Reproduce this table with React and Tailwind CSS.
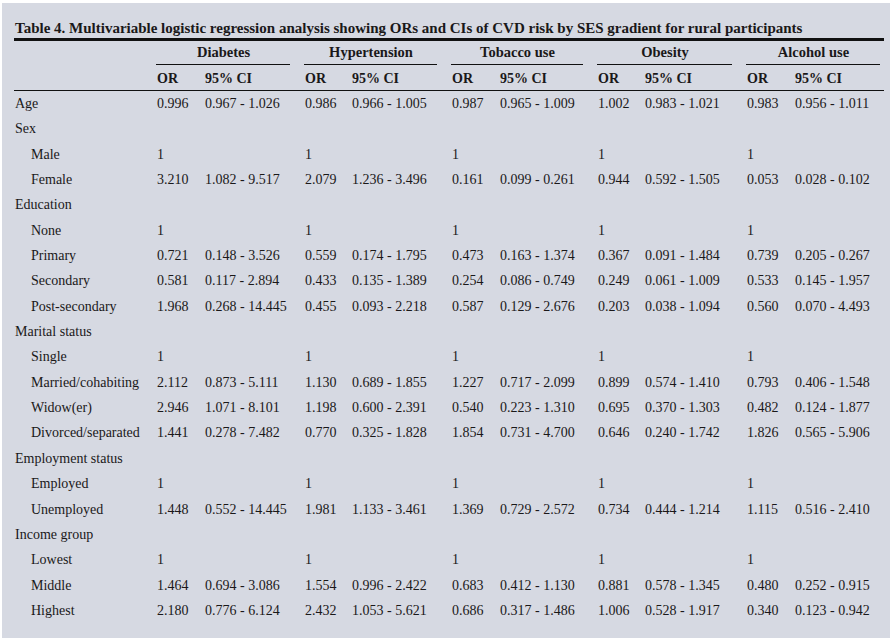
import React from "react";

const groups = ["Diabetes", "Hypertension", "Tobacco use", "Obesity", "Alcohol use"];

const ones = ["1", "", "1", "", "1", "", "1", "", "1", ""];

const rows = [
  { label: "Age", v: ["0.996", "0.967 - 1.026", "0.986", "0.966 - 1.005", "0.987", "0.965 - 1.009", "1.002", "0.983 - 1.021", "0.983", "0.956 - 1.011"] },
  { label: "Sex" },
  { label: "Male", sub: true, v: ones },
  { label: "Female", sub: true, v: ["3.210", "1.082 - 9.517", "2.079", "1.236 - 3.496", "0.161", "0.099 - 0.261", "0.944", "0.592 - 1.505", "0.053", "0.028 - 0.102"] },
  { label: "Education" },
  { label: "None", sub: true, v: ones },
  { label: "Primary", sub: true, v: ["0.721", "0.148 - 3.526", "0.559", "0.174 - 1.795", "0.473", "0.163 - 1.374", "0.367", "0.091 - 1.484", "0.739", "0.205 - 0.267"] },
  { label: "Secondary", sub: true, v: ["0.581", "0.117 - 2.894", "0.433", "0.135 - 1.389", "0.254", "0.086 - 0.749", "0.249", "0.061 - 1.009", "0.533", "0.145 - 1.957"] },
  { label: "Post-secondary", sub: true, v: ["1.968", "0.268 - 14.445", "0.455", "0.093 - 2.218", "0.587", "0.129 - 2.676", "0.203", "0.038 - 1.094", "0.560", "0.070 - 4.493"] },
  { label: "Marital status" },
  { label: "Single", sub: true, v: ones },
  { label: "Married/cohabiting", sub: true, v: ["2.112", "0.873 - 5.111", "1.130", "0.689 - 1.855", "1.227", "0.717 - 2.099", "0.899", "0.574 - 1.410", "0.793", "0.406 - 1.548"] },
  { label: "Widow(er)", sub: true, v: ["2.946", "1.071 - 8.101", "1.198", "0.600 - 2.391", "0.540", "0.223 - 1.310", "0.695", "0.370 - 1.303", "0.482", "0.124 - 1.877"] },
  { label: "Divorced/separated", sub: true, v: ["1.441", "0.278 - 7.482", "0.770", "0.325 - 1.828", "1.854", "0.731 - 4.700", "0.646", "0.240 - 1.742", "1.826", "0.565 - 5.906"] },
  { label: "Employment status" },
  { label: "Employed", sub: true, v: ones },
  { label: "Unemployed", sub: true, v: ["1.448", "0.552 - 14.445", "1.981", "1.133 - 3.461", "1.369", "0.729 - 2.572", "0.734", "0.444 - 1.214", "1.115", "0.516 - 2.410"] },
  { label: "Income group" },
  { label: "Lowest", sub: true, v: ones },
  { label: "Middle", sub: true, v: ["1.464", "0.694 - 3.086", "1.554", "0.996 - 2.422", "0.683", "0.412 - 1.130", "0.881", "0.578 - 1.345", "0.480", "0.252 - 0.915"] },
  { label: "Highest", sub: true, v: ["2.180", "0.776 - 6.124", "2.432", "1.053 - 5.621", "0.686", "0.317 - 1.486", "1.006", "0.528 - 1.917", "0.340", "0.123 - 0.942"] },
];

const cols = "grid grid-cols-[142px_49px_99px_48px_99px_49px_97px_48px_101px_49px_88px]";

export default function App() {
  return (
    <div className="w-[890px] h-[638px] bg-white pt-[3px] pl-[2px] overflow-hidden">
      <div
        className="h-full bg-[#d6d9e2] text-[#1a1819] pl-[12px]"
        style={{ fontFamily: '"Liberation Serif", "Times New Roman", serif' }}
      >
        <div className="w-[870px]">
          <div className="pt-[17px] h-[35px] leading-[16px] text-[15px] font-bold pl-px whitespace-nowrap">
            Table 4. Multivariable logistic regression analysis showing ORs and CIs of CVD risk by SES gradient for rural participants
          </div>
          <div className="h-[3px] bg-[#111]" />
          <div className={cols + " text-[14.5px] font-bold"}>
            <div />
            {groups.map((g, i) => (
              <div key={g} className={"col-span-2 " + (i === 4 ? "pr-[3px]" : "pr-[14px]")}>
                <div className="h-[24px] leading-[23px] text-center border-b border-[#111] pl-px">{g}</div>
              </div>
            ))}
          </div>
          <div className={cols + " text-[14px] font-bold h-[26px] leading-[27px] border-b border-[#111]"}>
            <div />
            {groups.map((g) => (
              <React.Fragment key={g}>
                <div className="pl-px">OR</div>
                <div>95% CI</div>
              </React.Fragment>
            ))}
          </div>
          {rows.map((r) => (
            <div key={r.label} className={cols + " text-[14px] h-[25.35px] leading-[26.6px] whitespace-nowrap"}>
              <div className={r.sub ? "pl-[17px]" : "pl-px"}>{r.label}</div>
              {(r.v || ["", "", "", "", "", "", "", "", "", ""]).map((x, i) => (
                <div key={i} className={i % 2 === 0 ? "pl-px" : ""}>{x}</div>
              ))}
            </div>
          ))}
        </div>
      </div>
    </div>
  );
}
